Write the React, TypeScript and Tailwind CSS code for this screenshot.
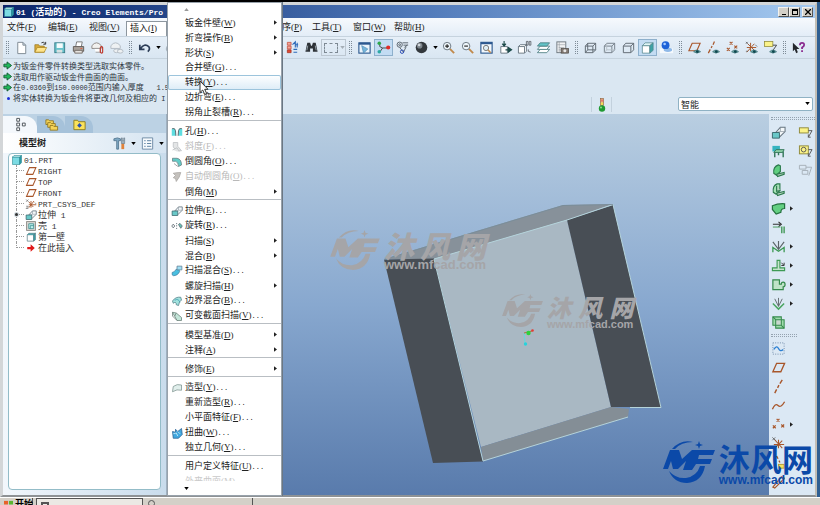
import type { ReactNode } from 'react';

// ---------- 文字 ----------

// 英文和数字用等宽字体，中文沿用外层字体
function Mixed({ text, small = false }: { text: string; small?: boolean }) {
  return (
    <>
      {text.split(/([\x20-\x7e]+)/).map((part, i) =>
        /^[\x20-\x7e]+$/.test(part) ? (
          <span key={i} className={small ? "font-['Liberation_Mono'] text-[7px]" : "font-['Liberation_Mono'] text-[8px]"}>
            {part}
          </span>
        ) : (
          part
        )
      )}
    </>
  );
}

function Label({ text, hotkey, dots = false }: { text: string; hotkey: string; dots?: boolean }) {
  return (
    <span className="whitespace-pre">
      {text}
      <span className="font-['Liberation_Serif'] text-[9px]">
        (<u>{hotkey}</u>)
      </span>
      {dots && <span className="font-['Liberation_Mono'] text-[7px]">...</span>}
    </span>
  );
}

// ---------- 图标 ----------

const BROWN = '#a8562a';
const eye = (
  <g>
    <path d="M7 12.5q3.5-3.6 7.5 0q-4 3-7.5 0z" fill="#6fa8a8" stroke="#3c6d74" strokeWidth=".7" />
    <circle cx="11" cy="12.3" r="1.5" fill="#10474f" />
  </g>
);
const cubeLines = 'M2.5 6.5h8v7h-8zM5 3.5h8.5v7L10.5 13.5M10.5 6.5l3-3M2.5 6.5L5 3.5';

const icons: Record<string, ReactNode> = {
  fresh: <path d="M4 2.5h5.5l3 3v9H4zM9.500 2.500v3h3" fill="#fff" stroke="#7c8791" />,
  open: (
    <g>
      <path d="M2 5h4l1 1.500h5V13H2z" fill="#d7a93a" stroke="#9b7a20" strokeWidth=".8" />
      <path d="M2 13l2.500-5h10L12 13z" fill="#ffe48a" stroke="#a98524" strokeWidth=".8" />
      <path d="M9 3q2.500-2 4 1M13.500 2v2.500H11" fill="none" stroke="#333" />
    </g>
  ),
  save: (
    <g>
      <rect x="3" y="3" width="10.500" height="10.500" fill="#69c3cc" stroke="#397e8b" />
      <rect x="5" y="3.500" width="6.500" height="5" fill="#f5fbfc" />
      <rect x="5" y="10.500" width="6" height="3" fill="#d8e1e2" />
    </g>
  ),
  print: (
    <g>
      <path d="M5 7l1-5h6l-1 5" fill="#fff" stroke="#777" />
      <path d="M2.500 7h11v5h-11z" fill="#aaa39c" stroke="#615b56" />
      <path d="M4 11h8v3H4z" fill="#e5e2df" stroke="#746d68" />
      <path d="M10 9h2" stroke="#e45c3c" />
    </g>
  ),
  mail: (
    <g>
      <path d="M2 6q5-6 10 0v3H2z" fill="#f2f1ef" stroke="#8e8985" />
      <path d="M5 9h6v4H6" fill="#fff" stroke="#999" />
      <path d="M11 8v5q1.500 2 2.500 0V8q-1-2-2.500 0" fill="none" stroke="#bd3529" strokeWidth="1.200" />
    </g>
  ),
  link: (
    <g fill="#eef1f3" stroke="#b2bbc3">
      <path d="M2 6q5-6 10 0v3H2z" />
      <ellipse cx="8" cy="11.500" rx="3" ry="2" />
      <ellipse cx="12" cy="12" rx="3" ry="2" />
    </g>
  ),
  undo: <path d="M3 5v5h5M3.500 9.500Q8 3 12.500 7q2 3-1 5.500" fill="none" stroke="#2c3d57" strokeWidth="1.800" />,
  redo: <path d="M13 5v5H8M12.500 9.500Q8 3 3.500 7q-2 3 1 5.500" fill="none" stroke="#a9b4bf" strokeWidth="1.500" />,
  regen: (
    <g>
      <path d="M2.500 2.500h4v3h-4zM2.500 6.500h4v3h-4z" fill="#f4a59a" stroke="#c4503e" strokeWidth=".8" />
      <path d="M2.500 10.500h4v3h-4z" fill="#e24b35" stroke="#a5301f" strokeWidth=".8" />
      <path d="M8 5l3-3v6M11 5h3M13 3v5M9 10h4M9 13h4" fill="none" stroke="#2c69b8" strokeWidth="1.200" />
    </g>
  ),
  find: (
    <g fill="#2d3237">
      <path d="M3.500 3h3l1 3h1l1-3h3l2 9.500H9.500V9h-3v3.500H1.500z" />
      <path d="M4 6l-1 5M12 6l1 5" stroke="#9aa5ae" />
    </g>
  ),
  view: (
    <g>
      <rect x="2" y="3" width="12" height="11" fill="#eaf4fb" stroke="#2b578f" strokeWidth="1.200" />
      <path d="M2 3h12v2H2z" fill="#2b578f" />
      <path d="M5 6l6.500 3.500L7 14z" fill="#74b5da" stroke="#4b86b3" strokeWidth=".7" />
    </g>
  ),
  spin: (
    <g>
      <path d="M4 4v3l3 1.500h6M7 8.500L4 13" fill="none" stroke="#444" />
      <circle cx="3.500" cy="3.500" r="1.900" fill="#2ca84a" />
      <circle cx="13" cy="8" r="2.200" fill="#e02a26" />
      <circle cx="3.500" cy="12.500" r="1.900" fill="#2ea9a5" />
    </g>
  ),
  orient: (
    <g fill="none" stroke="#59636c">
      <circle cx="5" cy="5" r="2.800" />
      <circle cx="5" cy="5" r="1" />
      <path d="M8 3h6M9 5.500h5M10 8l3-3M5 8l4 5 3-6" />
      <circle cx="7.500" cy="12.500" r="1.800" stroke="#2849b4" />
    </g>
  ),
  sphere: (
    <g>
      <circle cx="8" cy="8" r="6.200" fill="#33383d" />
      <circle cx="6" cy="6" r="3" fill="#7e868d" />
      <circle cx="5.500" cy="5.300" r="1.400" fill="#d5dade" />
    </g>
  ),
  zoomIn: (
    <g>
      <path d="M9.500 9.500l4.500 4.500" stroke="#c1894b" strokeWidth="2" />
      <circle cx="6.500" cy="6.500" r="4" fill="#eef6fb" stroke="#66737e" />
      <path d="M4.500 6.500h4M6.500 4.500v4" stroke="#222" strokeWidth="1.200" />
    </g>
  ),
  zoomOut: (
    <g>
      <path d="M9.500 9.500l4.500 4.500" stroke="#c1894b" strokeWidth="2" />
      <circle cx="6.500" cy="6.500" r="4" fill="#eef6fb" stroke="#66737e" />
      <path d="M4.500 6.500h4" stroke="#222" strokeWidth="1.200" />
    </g>
  ),
  refit: (
    <g>
      <rect x="2" y="2.500" width="12" height="11.500" fill="#f3f8fc" stroke="#2b578f" strokeWidth="1.200" />
      <path d="M2 2.500h12v2H2z" fill="#2b578f" />
      <circle cx="7.500" cy="8.500" r="2.800" fill="#dfeef5" stroke="#777" />
      <path d="M9.500 10.500l3 3" stroke="#c1894b" strokeWidth="1.600" />
    </g>
  ),
  named: (
    <g>
      <path d="M3 7h7v7H3z" fill="#fff" stroke="#6a7882" />
      <path d="M6.500 1v5M4.500 4l2 2.500 2-2.500M8 10.500h5M11 8l3.500 2.500L11 13z" fill="#1d4b4a" stroke="#1d4b4a" strokeWidth="1.200" />
    </g>
  ),
  saved: (
    <g>
      <path d="M1.500 7l2-2h6.500v7l-2 2H1.500zM1.500 7H8v7M8 7l2-2" fill="#fff" stroke="#6a7882" />
      <path d="M10 1.500v4h1.800v-4zM13 1.500v4h1.800v-4zM12 10v2l2.500 1" fill="none" stroke="#5a5f66" strokeWidth=".9" />
    </g>
  ),
  layers: (
    <g stroke="#4a7c80" strokeWidth=".9">
      <path d="M1.500 13.500l3-3.500h10l-3 3.500z" fill="#fff" />
      <path d="M1.500 10l3-3.500h10l-3 3.500z" fill="#fff" />
      <path d="M1.500 6.500l3-3.500h10l-3 3.500z" fill="#62c4c7" />
    </g>
  ),
  camera: (
    <g>
      <rect x="2" y="2" width="9.500" height="11.500" fill="#f2f3f4" stroke="#6e777f" />
      <path d="M2 5h9.500M4.500 2v11M4 8h6M4 10.500h6" stroke="#9aa1a7" strokeWidth=".7" />
      <rect x="6.500" y="9" width="8" height="5" fill="#847b74" stroke="#47423e" strokeWidth=".7" />
      <circle cx="10.500" cy="11.500" r="1.600" fill="#e8e8e8" />
    </g>
  ),
  wire: <path d={cubeLines + 'M5 3.500v7h8.500M5 10.500l-2.500 3'} fill="none" stroke="#5e6870" />,
  hidden: (
    <g fill="none" stroke="#737e87">
      <path d={cubeLines} />
      <path d="M5 3.500v7h8.500M5 10.500l-2.500 3" stroke="#b7c0c7" />
    </g>
  ),
  noHidden: <path d={cubeLines} fill="none" stroke="#5e6870" />,
  shaded: (
    <g stroke="#54868c" strokeWidth=".8">
      <path d="M2.500 6h8v8h-8z" fill="#fff" />
      <path d="M2.500 6l3-3h8.500l-3.500 3z" fill="#dff5f6" />
      <path d="M10.500 6L14 3v8l-3.500 3z" fill="#3aa3a6" />
    </g>
  ),
  enhanced: (
    <g>
      <path d="M1 9h14v5H1z" fill="#f5f9fd" />
      <ellipse cx="9.500" cy="10.500" rx="4.500" ry="2.200" fill="#8fb9e8" />
      <circle cx="7" cy="5.500" r="4.200" fill="#1d62d8" />
      <circle cx="6" cy="4.300" r="1.400" fill="#a4cbff" />
    </g>
  ),
  planeEye: (
    <g>
      <path d="M2 11.500L5.500 3.500h8.500L10.500 11.500z" fill="none" stroke={BROWN} strokeWidth="1.200" />
      {eye}
    </g>
  ),
  axisEye: (
    <g>
      <path d="M2.500 14l2-4M5.500 8.500l1-2M7.500 5l1.500-3.500" stroke={BROWN} strokeWidth="1.300" />
      {eye}
    </g>
  ),
  pointEye: (
    <g>
      <path d="M5 2l3 3M8 2L5 5M2 8.500l3 3M5 8.500l-3 3M10 6l3 3M13 6l-3 3" stroke={BROWN} strokeWidth="1.200" />
      {eye}
    </g>
  ),
  csysEye: (
    <g>
      <path d="M7 3v9M3 8h10M4 4l7 7M11 4l-8 9" stroke={BROWN} strokeWidth="1" />
      <path d="M2 2l2 2M4 2L2 4M12 5l2 2M2 12h2" stroke="#555" strokeWidth=".8" />
      {eye}
    </g>
  ),
  noteEye: (
    <g>
      <rect x="1.500" y="1.500" width="9" height="5.500" fill="#fbf389" stroke="#8f8939" strokeWidth=".8" />
      <path d="M10.500 5.500h4l-3.500 5" fill="none" stroke="#444" />
      {eye}
    </g>
  ),
  help: (
    <g>
      <path d="M2 3v9l2-2 1.500 4 1.800-1L6 9.500h3z" fill="#23272c" />
      <path d="M9.500 5.500q0-2.500 2.300-2.500t2.200 2.300q0 1.500-2.200 2.700v1.500M11.800 11v1.800" fill="none" stroke="#8a2a8f" strokeWidth="1.900" />
    </g>
  ),
  // 模型树
  part: (
    <g stroke="#2b8a94" strokeWidth=".8">
      <path d="M2 4h9.500v10H2z" fill="#7ddbe3" />
      <path d="M2 4l2-2h10l-2.500 2z" fill="#d8fafc" />
      <path d="M11.500 4L14 2v9.500L11.500 14z" fill="#2d9aa5" />
    </g>
  ),
  plane: <path d="M2 12.500L6 3.500h8.500L10.500 12.500z" fill="none" stroke={BROWN} strokeWidth="1.400" />,
  csys: (
    <g>
      <path d="M8 4v9M5 9h10M5 5l6 7M12 4l-7 9" stroke={BROWN} strokeWidth="1.200" />
      <path d="M1.500 2l3 3M4.500 2l-3 3M1.500 11h3l-3 3h3M13 6l2 2" stroke="#666" strokeWidth=".9" fill="none" />
    </g>
  ),
  extrude: (
    <g>
      <path d="M5 8l5-5.500h5v4.500l-6 6" fill="#f4f8fa" stroke="#66747f" strokeWidth="1.100" />
      <path d="M10 2.500v4.500h5M5 8l5-1" fill="none" stroke="#8d99a2" strokeWidth=".8" />
      <path d="M1.500 8h7.500v6H1.500z" fill="#69c8c8" stroke="#39666c" strokeWidth="1" />
    </g>
  ),
  shell: (
    <g>
      <path d="M2 2h12v12H2z" fill="#d5d3cf" stroke="#7d7b77" />
      <path d="M5 5h6.500v6.500H5z" fill="#bff0ee" stroke="#39898c" />
      <path d="M7 11.500V7.500h4.500" fill="none" stroke="#39898c" />
    </g>
  ),
  wall: (
    <g>
      <path d="M3 5h8.500v8.500H3z" fill="#fff" stroke="#5b7f86" />
      <path d="M3 5l2-2h9l-2.500 2M11.500 5L14 3v8.500l-2.500 2z" fill="#3aa0a8" stroke="#5b7f86" strokeWidth=".8" />
    </g>
  ),
  insert: <path d="M3 6.500h4.500V3L13 8l-5.500 5V9.500H3z" fill="#e01919" />,
  // 菜单
  hole: (
    <g>
      <path d="M1 3.500h4q1.500 1 1.500 9.500H1zM15 3.500h-4q-1.500 1-1.500 9.500H15z" fill="#5fdde0" />
      <path d="M1.500 3.500h3q2 1 2 9.500M14.500 3.500h-3q-2 1-2 9.500" fill="none" stroke="#5d6a70" strokeWidth="1.300" />
    </g>
  ),
  draft: (
    <g fill="#e3e5e6" stroke="#b9bdc0">
      <path d="M3 2h6v5l5 6H7L3 8z" />
      <path d="M2 12l6-3 3 5" />
    </g>
  ),
  round: (
    <g>
      <path d="M2 3h6q6 1 6 9l-4 2q0-6-4-7H2z" fill="#62ccc7" stroke="#5b6f73" strokeWidth=".9" />
      <path d="M4 10l5 4" stroke="#888" />
    </g>
  ),
  autoRound: <path d="M3 3q5-1 10-1-1 6-6 12l-1-4-3-1 3-3z" fill="#c4c1bd" stroke="#a7a4a0" />,
  revolve: (
    <g fill="none" stroke="#67737a" strokeWidth="1.200">
      <path d="M3 5.500L5 8l-2 2.500L1 8z" />
      <path d="M7.500 4v1.500M7.500 7v1.500M7.500 10.500V12" />
      <path d="M10 6l2-1.500 3 3.500-2 3z" fill="#5fc4b7" />
    </g>
  ),
  sweepBlend: (
    <g>
      <path d="M1.500 10q4-1 5-4l4-1 1 4q-3 5-6 5-3 1-4-1z" fill="#49bfe0" stroke="#356f94" strokeWidth=".8" />
      <path d="M8 1.500h6.500v5H8z" fill="#9fe0f5" stroke="#5d7c94" />
    </g>
  ),
  boundary: (
    <g>
      <path d="M2 8q4-6 11-5l1 4q-3 0-4 7l-3-1q0-5-4-2z" fill="#a2e3de" stroke="#4d7c85" />
      <path d="M5 7q5-3 7 3" fill="none" stroke="#3e9bb0" />
    </g>
  ),
  varSweep: (
    <g>
      <path d="M2 3l5 1 7 6v4H8z" fill="#c3e6d9" stroke="#657c74" />
      <path d="M2 3v5l6 6M7 4L5 8" fill="none" stroke="#657c74" />
    </g>
  ),
  style: <path d="M2 13l1-7q5-4 11-2v7q-6-2-12 2z" fill="#e1efec" stroke="#7b918d" />,
  warp: (
    <g>
      <path d="M2 6l4 1V3l3 3 5-4 1 8-5 5H3z" fill="#41a8df" stroke="#2a5f91" />
      <path d="M3 9l4-1 2 4M9 6l3 3" fill="none" stroke="#d7f1fb" />
    </g>
  ),
  // 右侧工具栏
  flatWall: (
    <g>
      <path d="M1.500 2h8v6h-8z" fill="#35b4c0" />
      <path d="M3 9l2.500-3H14l-1.500 3z" fill="#8bcfa6" stroke="#33775a" />
      <path d="M4 9v5M8 9v3M13 8v6" stroke="#33775a" strokeWidth="1.500" />
    </g>
  ),
  flange: (
    <g stroke="#2b7a4c" strokeWidth="1.200">
      <path d="M3 11q-1-7 5-9l2 1v6l-4 4z" fill="#5fcf80" />
      <path d="M6 12l8-2v2l-7 2.500z" fill="#a9c9b5" />
    </g>
  ),
  flange2: (
    <g stroke="#2b7a4c" strokeWidth="1.200">
      <path d="M2.500 11q-1-7 4-9h3v7l-4 4z" fill="#a4e2b5" />
      <path d="M6 4v6l4-1M6 12l8-2v2l-7 2.500z" fill="#b9d5c1" />
    </g>
  ),
  bendBack: <path d="M1.500 5q6-2.500 13-2v5q-4 0-4 4l-5 2-4-5z" fill="#63cf82" stroke="#24713f" strokeWidth="1.300" />,
  extend: (
    <g>
      <path d="M2 4.500h8M8 2l3 2.500L8 7" fill="none" stroke="#333" strokeWidth="1.200" />
      <path d="M2 7.500h8" stroke="#459a5a" />
      <path d="M11.500 7v7M14 7v7" stroke="#459a5a" strokeWidth="1.500" />
    </g>
  ),
  bend: (
    <g fill="none">
      <path d="M2 3l6 8 6-8M8 2v9" stroke="#5c6467" strokeWidth="1.200" />
      <path d="M2 14V9l6 4 6-4v5" stroke="#3e9a55" strokeWidth="1.400" />
    </g>
  ),
  edgeBend: (
    <g>
      <path d="M1.500 10.500h5v-8h3v8h5v3h-13z" fill="#c5e3cc" stroke="#3e9a55" strokeWidth="1.200" />
      <path d="M11 5l2.500 2.500M14 5v3h-3" fill="none" stroke="#333" />
    </g>
  ),
  notch: <path d="M2 3h7v4.500h2q0-2 2-2t2 2.500-2 2.500v3H2z" fill="#bfe3c7" stroke="#358a4c" strokeWidth="1.300" />,
  punch: (
    <g fill="none">
      <path d="M8 2v9M4 3l4 8 4-8" stroke="#61696c" />
      <path d="M2 8l6 6 6-6" stroke="#4aa660" strokeWidth="1.600" />
    </g>
  ),
  unbend: (
    <g stroke="#358a4c" strokeWidth="1.100">
      <path d="M2 2h9v3h3v9H5v-3H2z" fill="#9fdcac" />
      <path d="M5 5h6v6H5zM2 2l3 3M11 11l3 3" fill="#c9d8cf" />
    </g>
  ),
  sketch: (
    <g fill="none">
      <path d="M2 2h12v12H2z" stroke="#6d87a5" strokeDasharray="1 1.500" />
      <path d="M3 9q3-5 5-1t5 1" stroke="#2a7fd2" strokeWidth="1.500" />
    </g>
  ),
  axis: <path d="M4 15l2-4M7 9.500l1.500-3M9.500 5L12 1" stroke={BROWN} strokeWidth="1.500" />,
  curve: <path d="M1.500 12q3-7 6-4t7-4" fill="none" stroke={BROWN} strokeWidth="1.400" />,
  points: <path d="M6 2l3 3M9 2L6 5M2 9l3 3M5 9l-3 3M11 8l3 3M14 8l-3 3" stroke={BROWN} strokeWidth="1.300" />,
  csysNew: (
    <g>
      <path d="M8 4v9M3 9h11M4 4l8 9M12 5l-8 8" stroke={BROWN} strokeWidth="1.100" />
      <path d="M1.500 1.500l3 3M4.500 1.500l-3 3" stroke="#666" />
    </g>
  ),
  axisNote: (
    <g>
      <path d="M6 1l1.500 3M8.500 6l1 2" stroke={BROWN} strokeWidth="1.400" />
      <rect x="8" y="10" width="6" height="4" fill="#f5df62" stroke="#b59c31" />
    </g>
  ),
  dim: <path d="M2 14L11 3q3 0 3 2L4 15z" fill="none" stroke={BROWN} strokeWidth="1.300" />,
  note: (
    <g>
      <rect x="1.500" y="3" width="9.500" height="5.500" fill="#fbf389" stroke="#8f8939" />
      <path d="M11 6h4l-4 7M11 10v3h2.500" fill="none" stroke="#555" />
    </g>
  ),
  noteSymbol: (
    <g>
      <rect x="1.500" y="2" width="9.500" height="8.500" fill="#fbf389" stroke="#8f8939" />
      <circle cx="6" cy="6" r="2.500" fill="none" stroke="#555" />
      <path d="M11 6h4l-4 7M11 10v3h2.500" fill="none" stroke="#555" />
    </g>
  ),
  noteGray: (
    <g fill="none" stroke="#a5afb8">
      <path d="M1.500 2.500h7v4h-7zM4.500 8h6v4h-6zM8.500 4.500h6l-3 9" />
    </g>
  ),
  // 面板
  tools: (
    <g>
      <path d="M2 3q4-2 7 0v2H7v9H5V5H2z" fill="#7ea8c4" stroke="#4a6c86" strokeWidth=".8" />
      <path d="M10 8h3v6h-3z" fill="#e0833c" />
      <path d="M10 8V2h1v3h1.500V2h1v6z" fill="#9fb1bd" stroke="#5d7080" strokeWidth=".6" />
    </g>
  ),
  list: (
    <g>
      <path d="M2.500 2h11v12h-11z" fill="#f5f9fc" stroke="#6e8ba5" />
      <path d="M4.500 5h1.500M4.500 8h1.500M4.500 11h1.500M7.500 5H12M7.500 8H12M7.500 11H12" stroke="#5a7fa0" />
    </g>
  ),
  treeTab: (
    <g fill="#fff" stroke="#4a5157">
      <path d="M4 1.500h3v3H4zM4 6.500h3v3H4zM4 11.500h3v3H4zM10 6.500h3v3h-3z" />
    </g>
  ),
  folders: (
    <g fill="#f5d458" stroke="#8d7420" strokeWidth=".9">
      <path d="M2 3h3l1 1h4v4H2z" />
      <path d="M4 6h3l1 1h4v4H4z" />
      <path d="M6.500 9h3l1 1h4v4h-8z" />
    </g>
  ),
  favorite: (
    <g>
      <path d="M2 3.500h4l1 1.500h7v8.500H2z" fill="#fae25c" stroke="#8d7f20" />
      <path d="M8 6.500L10.500 9 8 11.500 5.500 9z" fill="#2b50b0" />
    </g>
  ),
};

function Icon({ name, small = false }: { name: string; small?: boolean }) {
  return (
    <svg viewBox="0 0 16 16" aria-hidden="true" className={small ? 'size-[12px] shrink-0' : 'size-[15px] shrink-0'}>
      {icons[name]}
    </svg>
  );
}

function Down({ className = 'text-black' }: { className?: string }) {
  return (
    <svg viewBox="0 0 6 4" aria-hidden="true" className={`h-[3px] w-[5px] shrink-0 ${className}`}>
      <path d="M0 0h6L3 4z" fill="currentColor" />
    </svg>
  );
}

function Right() {
  return (
    <svg viewBox="0 0 4 6" aria-hidden="true" className="h-[5px] w-[3px] shrink-0 text-[#222]">
      <path d="M0 0v6l4-3z" fill="currentColor" />
    </svg>
  );
}

// ---------- 标题栏、菜单栏 ----------

function TitleBar() {
  const button = 'flex h-[10px] w-[11px] items-end justify-center border border-[#f4f2ee] border-r-[#555] border-b-[#555] bg-[#d4d0c8]';
  return (
    <header className="flex h-[13px] shrink-0 items-center bg-linear-to-r from-[#0a246a] via-[#4f78b8] to-[#a6caf0] pr-0.5 text-white">
      <Icon name="part" small />
      <h1 className="ml-px flex-1 overflow-hidden text-[9px] leading-[13px] font-bold whitespace-pre">
        <Mixed text="01 (活动的) - Creo Elements/Pro S" />
      </h1>
      <button aria-label="最小化" className={button}>
        <span className="mb-px h-px w-1 bg-black" />
      </button>
      <button aria-label="最大化" className={button}>
        <span className="mb-px h-[6px] w-[6px] border border-t-2 border-black" />
      </button>
      <button aria-label="关闭" className={`${button} ml-0.5`}>
        <svg viewBox="0 0 6 6" className="mb-px size-[6px]">
          <path d="M0 0l6 6M6 0L0 6" stroke="#000" strokeWidth="1.300" />
        </svg>
      </button>
    </header>
  );
}

function MenuBar() {
  const item = 'w-[41px] shrink-0 pl-1 text-left';
  return (
    <nav className="flex h-[18px] shrink-0 items-stretch bg-linear-to-b from-[#f6f9fd] to-[#e3edf7] text-[9px] leading-[18px] text-[#222]">
      <button className={item}><Label text="文件" hotkey="F" /></button>
      <button className={item}><Label text="编辑" hotkey="E" /></button>
      <button className={item}><Label text="视图" hotkey="V" /></button>
      <button className="mt-[3px] w-[41px] shrink-0 border border-b-0 border-[#8d969e] bg-white pb-[3px] pl-[3px] text-left leading-[10px]">
        <Label text="插入" hotkey="I" />
      </button>
      <span className="w-[111px] shrink-0" />
      <button className="w-[30px] shrink-0 pl-1 text-left"><Label text="序" hotkey="P" /></button>
      <button className={item}><Label text="工具" hotkey="T" /></button>
      <button className={item}><Label text="窗口" hotkey="W" /></button>
      <button className={item}><Label text="帮助" hotkey="H" /></button>
    </nav>
  );
}

// ---------- 工具栏 ----------

function Grip() {
  return (
    <span className="flex w-[9px] shrink-0 justify-center gap-px py-0.5">
      <span className="border-l border-dotted border-[#7e8b97]" />
      <span className="border-l border-dotted border-[#7e8b97]" />
    </span>
  );
}

function Tool({ name, active = false }: { name: string; active?: boolean }) {
  return (
    <button
      aria-label={name}
      className={`flex w-[19px] shrink-0 items-center justify-center ${active ? 'border border-[#8eb0cc] bg-[#c3dcf3]' : ''}`}
    >
      <Icon name={name} />
    </button>
  );
}

function Drop() {
  return (
    <button aria-label="更多" className="flex w-2 shrink-0 items-center justify-center">
      <Down />
    </button>
  );
}

function ToolBar() {
  return (
    <div className="flex h-[23px] shrink-0 items-stretch border-t border-b border-[#c6d3de] bg-linear-to-b from-[#e6eff8] to-[#d9e6f2] py-0.5">
      <div className="flex w-[280px] shrink-0 items-stretch">
        <Grip />
        {['fresh', 'open', 'save', 'print', 'mail', 'link'].map((n) => <Tool key={n} name={n} />)}
        <Grip />
        <Tool name="undo" />
        <Drop />
        <Tool name="redo" />
      </div>
      <Tool name="regen" />
      <Tool name="find" />
      <button aria-label="选取框" className="flex w-[25px] shrink-0 items-center border border-[#bcc7d1] pl-0.5">
        <span className="h-[10px] w-[14px] border border-dashed border-[#7d8993]" />
        <Down className="ml-0.5 text-[#a5aeb6]" />
      </button>
      <Grip />
      <Tool name="view" />
      <Tool name="spin" active />
      <Tool name="orient" />
      <Tool name="sphere" />
      <Drop />
      {['zoomIn', 'zoomOut', 'refit', 'named', 'saved', 'layers', 'camera'].map((n) => <Tool key={n} name={n} />)}
      <Grip />
      {['wire', 'hidden', 'noHidden'].map((n) => <Tool key={n} name={n} />)}
      <Tool name="shaded" active />
      <Tool name="enhanced" />
      <Grip />
      {['planeEye', 'axisEye', 'pointEye', 'csysEye', 'noteEye'].map((n) => <Tool key={n} name={n} />)}
      <Grip />
      <Tool name="help" />
    </div>
  );
}

// ---------- 消息区 ----------

const messages = [
  '为钣金件零件转换类型选取实体零件。',
  '选取用作驱动钣金件曲面的曲面。',
  '在0.0360到150.0000范围内输入厚度   1.5',
];

function MessageArea() {
  return (
    <section className="flex h-[55px] shrink-0 items-end bg-[#dae7f2] pr-0.5">
      <ul className="flex-1 self-start pt-px text-[8px] leading-[11px] whitespace-pre text-[#2c343c]">
        {messages.map((m) => (
          <li key={m} className="flex h-[11px] items-center gap-px">
            <svg viewBox="0 0 10 10" className="size-[9px] shrink-0">
              <path d="M1 3.500h3.500V1L9.500 5 4.500 9V6.500H1z" fill="#1fb95a" stroke="#10572c" />
            </svg>
            <span><Mixed text={m} small /></span>
          </li>
        ))}
        <li className="flex h-[11px] items-center gap-[3px] pl-1">
          <span className="size-[3px] rounded-full bg-[#1b2fd6]" />
          <span><Mixed text="将实体转换为钣金件将更改几何及相应的 I" small /></span>
        </li>
      </ul>
      <div className="mb-0.5 flex h-[15px] w-[21px] items-center justify-center border-x border-[#c3d1dd]">
        <svg viewBox="0 0 8 14" className="h-[14px] w-2">
          <rect x="2.500" y="0.500" width="3" height="7" fill="#e3c08a" stroke="#8b5d38" strokeWidth=".6" />
          <circle cx="4" cy="2.500" r="1.200" fill="#e8786a" />
          <circle cx="4" cy="5.800" r="1.200" fill="#f2dd55" />
          <circle cx="4" cy="10.500" r="3.200" fill="#1f9a33" />
          <circle cx="3" cy="9.500" r="1" fill="#8fe08f" />
        </svg>
      </div>
      <label className="relative mb-[3px] ml-[66px] w-[135px]">
        <select aria-label="过滤器" className="block h-[14px] w-full appearance-none rounded-xs border border-[#8fb2c4] bg-white pl-0.5 text-[9px] leading-[11px] text-[#222]">
          <option>智能</option>
        </select>
        <span className="pointer-events-none absolute top-[5px] right-[3px] flex"><Down /></span>
      </label>
    </section>
  );
}

// ---------- 模型树 ----------

const tree = [
  { icon: 'plane', text: 'RIGHT' },
  { icon: 'plane', text: 'TOP' },
  { icon: 'plane', text: 'FRONT' },
  { icon: 'csys', text: 'PRT_CSYS_DEF' },
  { icon: 'extrude', text: '拉伸 1', expand: true },
  { icon: 'shell', text: '壳 1' },
  { icon: 'wall', text: '第一壁' },
  { icon: 'insert', text: '在此插入' },
];

function ModelTree() {
  return (
    <aside className="flex w-[164px] shrink-0 flex-col border-r border-[#9fb0c0] bg-linear-to-r from-[#f2f7fc] to-[#c9dcec]">
      <div className="flex h-[19px] shrink-0 items-end bg-[#bcd2e4]">
        <button aria-label="模型树" className="flex h-[17px] w-[34px] items-center justify-center rounded-tr-xl bg-[#f4f8fc]"><Icon name="treeTab" /></button>
        <button aria-label="文件夹" className="flex h-[17px] w-7 items-center justify-center rounded-tr-xl bg-[#a6c2da]"><Icon name="folders" /></button>
        <button aria-label="收藏夹" className="flex h-[17px] w-7 items-center justify-center rounded-tr-xl bg-[#a6c2da]"><Icon name="favorite" /></button>
      </div>
      <div className="flex h-5 shrink-0 items-center bg-linear-to-r from-white to-[#d5e4f1] pr-0.5 pl-4">
        <h2 className="flex-1 text-[9px] font-bold text-[#222]">模型树</h2>
        <Icon name="tools" />
        <span className="mx-1 flex"><Down /></span>
        <Icon name="list" />
        <span className="ml-1 flex"><Down /></span>
      </div>
      <div className="mx-[5px] mb-[5px] flex-1 rounded-sm border border-[#93bcc8] bg-white pl-[2px] text-[9px] leading-[11px] text-[#333]">
        <div className="flex h-[11px] items-center gap-px">
          <Icon name="part" small />
          <span><Mixed text="01.PRT" /></span>
        </div>
        <ul className="ml-[5px]">
          {tree.map((node, i) => (
            <li key={node.text} className="relative flex h-[11px] items-center gap-px">
              <span className="h-[6px] w-[8px] shrink-0 self-start border-b border-l border-dotted border-[#9a9a9a]" />
              {i < tree.length - 1 && <span className="absolute top-[6px] left-0 h-[5px] border-l border-dotted border-[#9a9a9a]" />}
              {node.expand && (
                <span className="absolute top-[3px] left-[-2px] flex size-[5px] items-center justify-center rounded-full bg-[#cfd8de]">
                  <span className="size-[3px] rounded-full bg-[#333]" />
                </span>
              )}
              <Icon name={node.icon} small />
              <span className="whitespace-pre"><Mixed text={node.text} /></span>
            </li>
          ))}
        </ul>
      </div>
    </aside>
  );
}

// ---------- 插入菜单 ----------

interface Entry {
  text: string;
  hotkey: string;
  icon?: string;
  sub?: boolean;
  disabled?: boolean;
  active?: boolean;
}

const groups: Entry[][] = [
  [
    { text: '钣金件壁', hotkey: 'W', sub: true },
    { text: '折弯操作', hotkey: 'B', sub: true },
    { text: '形状', hotkey: 'S', sub: true },
    { text: '合并壁', hotkey: 'G' },
    { text: '转换', hotkey: 'Y', active: true },
    { text: '边折弯', hotkey: 'E' },
    { text: '拐角止裂槽', hotkey: 'R' },
  ],
  [
    { text: '孔', hotkey: 'H', icon: 'hole' },
    { text: '斜度', hotkey: 'F', icon: 'draft', disabled: true },
    { text: '倒圆角', hotkey: 'O', icon: 'round' },
    { text: '自动倒圆角', hotkey: 'O', icon: 'autoRound', disabled: true },
    { text: '倒角', hotkey: 'M', sub: true },
  ],
  [
    { text: '拉伸', hotkey: 'E', icon: 'extrude' },
    { text: '旋转', hotkey: 'R', icon: 'revolve' },
    { text: '扫描', hotkey: 'S', sub: true },
    { text: '混合', hotkey: 'B', sub: true },
    { text: '扫描混合', hotkey: 'S', icon: 'sweepBlend' },
    { text: '螺旋扫描', hotkey: 'H', sub: true },
    { text: '边界混合', hotkey: 'B', icon: 'boundary' },
    { text: '可变截面扫描', hotkey: 'V', icon: 'varSweep' },
  ],
  [
    { text: '模型基准', hotkey: 'D', sub: true },
    { text: '注释', hotkey: 'A', sub: true },
  ],
  [{ text: '修饰', hotkey: 'E', sub: true }],
  [
    { text: '造型', hotkey: 'Y', icon: 'style' },
    { text: '重新造型', hotkey: 'R' },
    { text: '小平面特征', hotkey: 'F' },
    { text: '扭曲', hotkey: 'W', icon: 'warp' },
    { text: '独立几何', hotkey: 'Y' },
  ],
  [{ text: '用户定义特征', hotkey: 'U' }],
];

function InsertMenu() {
  return (
    <div role="menu" className="absolute top-0 bottom-[9px] left-[167px] z-20 flex w-[115px] flex-col border border-[#98a2ab] bg-white text-[9px] text-[#222] shadow-[1px_0_0_#6b7783]">
      <span className="flex h-3 shrink-0 items-center pl-4">
        <svg viewBox="0 0 6 4" className="h-[3px] w-[5px]"><path d="M0 4h6L3 0z" fill="#999" /></svg>
      </span>
      {groups.map((group, g) => (
        <div key={g} role="group" className={g > 0 ? 'shrink-0 border-t border-[#b9bec3] pt-[3px]' : 'shrink-0'}>
          {group.map((entry) => (
            <button
              key={entry.text}
              role="menuitem"
              disabled={entry.disabled}
              className={`flex h-[15px] w-full items-center rounded-xs pr-1 text-left leading-[13px] disabled:text-[#b9b9b9] ${
                entry.active ? 'bg-linear-to-b from-white to-[#dcecf7] ring-1 ring-[#9cc4dc] ring-inset' : ''
              }`}
            >
              <span className="flex w-[17px] shrink-0 justify-center">{entry.icon && <Icon name={entry.icon} small />}</span>
              <span className="flex-1"><Label text={entry.text} hotkey={entry.hotkey} dots={!entry.sub} /></span>
              {entry.sub && <Right />}
            </button>
          ))}
        </div>
      ))}
      <span className="block h-[7px] shrink-0 overflow-hidden pl-[17px] leading-[13px] text-[#c9c9c9]">
        <Label text="外来曲面" hotkey="M" />
      </span>
      <span className="flex flex-1 items-center pl-4"><Down /></span>
    </div>
  );
}

function Cursor() {
  return (
    <svg viewBox="0 0 10 16" className="absolute top-[78px] left-[199px] z-30 h-4 w-[10px]">
      <path d="M1 1v11.500l2.700-2.500 2 4.500 2-1-2-4.200H9z" fill="#fff" stroke="#333" />
    </svg>
  );
}

// ---------- 三维视图 ----------

function Logo({ className }: { className: string }) {
  return (
    <svg viewBox="0 0 52 42" className={className} fill="currentColor">
      <path d="M0 28L7 9h9l3 9 10-9h23l-2 5H36l-1 4h14l-2 5H33l-4 6h-9l3-9-8 8h-5l-2-8-3 8z" />
      <path d="M9 8Q18-2 30 1 18 1 12 8zM6 30q7 8 17 7 11-2 14-12h5Q39 41 24 42 11 42 6 30z" />
      <path d="M36 0l1 3 3 1-3 1-1 3-1-3-3-1 3-1z" />
    </svg>
  );
}

function CanvasMark({ large = false }: { large?: boolean }) {
  return (
    <div className="flex items-start gap-1 text-[#a5a5a8]">
      <Logo className={large ? 'h-[40px] w-[50px]' : 'h-[33px] w-[41px]'} />
      <div>
        <div className={`flex justify-between font-black italic ${large ? 'text-[30px] leading-[30px]' : 'text-[24px] leading-[25px]'}`}>
          <span>沐</span><span>风</span><span>网</span>
        </div>
        <div className={`font-['Liberation_Sans'] font-bold ${large ? 'text-[13px] leading-[10px]' : 'text-[11px] leading-[10px]'}`}>www.mfcad.com</div>
      </div>
    </div>
  );
}

function Viewport() {
  return (
    <main className="relative flex-1 overflow-hidden bg-linear-to-b from-[#b9cee1] via-[#88a8cf] to-[#597bac]">
      <svg viewBox="167 114 602 382" preserveAspectRatio="xMinYMin meet" className="h-[382px] w-[602px]">
        <path d="M384 259L563 205 613 204 567 220 434 259z" fill="#87919a" />
        <path d="M434 259L567 220 611 407 481 447z" fill="#a9b8c3" />
        <path d="M481 447L611 407 629 409 628 417 483 461z" fill="#848e96" />
        <path d="M384 259.500L434 258.500 483 461.500 433 463z" fill="#484e55" />
        <path d="M567 220L613 205 661 407 611 407z" fill="#484e55" />
        <path d="M434 259L483 461 628 417M434 259L567 220 613 204.500 661 407.500H630" fill="none" stroke="#b5d3da" />
        <path d="M384 259.500L563 205.500 613 204.500" fill="none" stroke="#778d99" strokeWidth=".8" />
        <path d="M524 333l1 10" stroke="#67d7df" />
        <path d="M524 333l8-2" stroke="#b46d3c" />
        <circle cx="525.500" cy="344" r="1.700" fill="#27d3dc" />
        <circle cx="528.500" cy="333" r="2.200" fill="#2bd23b" />
        <circle cx="532.500" cy="330.500" r="1.300" fill="#e33b34" />
      </svg>
      <div className="absolute top-[116px] left-[163px]"><CanvasMark large /></div>
      <div className="absolute top-[180px] left-[335px]"><CanvasMark /></div>
    </main>
  );
}

// ---------- 右侧工具栏 ----------

const sideTools: { name: string; more?: boolean }[] = [
  { name: 'extrude' }, { name: 'flatWall' }, { name: 'flange' }, { name: 'flange2' },
  { name: 'bendBack', more: true }, { name: 'extend' }, { name: 'bend', more: true },
  { name: 'edgeBend', more: true }, { name: 'notch', more: true }, { name: 'punch', more: true }, { name: 'unbend' },
];
const datumTools: { name: string; more?: boolean }[] = [
  { name: 'sketch' }, { name: 'plane' }, { name: 'axis' }, { name: 'curve' },
  { name: 'points', more: true }, { name: 'csysNew' }, { name: 'axisNote' }, { name: 'dim' },
];

function SideTool({ name, more = false }: { name: string; more?: boolean }) {
  return (
    <button aria-label={name} className="flex h-[19px] items-center gap-1">
      <Icon name={name} />
      {more && <Right />}
    </button>
  );
}

function SideBar() {
  return (
    <aside className="flex w-[46px] shrink-0 justify-between overflow-hidden bg-[#dbe8f4] pt-[3px] pl-0.5">
      <div className="flex flex-col">
        <span className="mb-[3px] h-[3px] w-[26px] border-y border-dotted border-[#94a2af]" />
        {sideTools.map((t) => <SideTool key={t.name} {...t} />)}
        <span className="my-0.5 h-[3px] w-[26px] border-y border-dotted border-[#94a2af]" />
        {datumTools.map((t) => <SideTool key={t.name} {...t} />)}
      </div>
      <div className="flex flex-col">
        <span className="mb-[3px] h-[3px] w-[17px] border-y border-dotted border-[#94a2af]" />
        {['note', 'noteSymbol', 'noteGray'].map((n) => <SideTool key={n} name={n} />)}
      </div>
    </aside>
  );
}

// ---------- 任务栏 ----------

function TaskBar() {
  return (
    <footer className="flex h-2 shrink-0 items-start overflow-hidden border-t border-white bg-[#d4d0c8] text-[9px] leading-[12px]">
      <button className="flex h-4 w-[33px] shrink-0 items-start gap-0.5 border-r border-[#555] pl-1 font-bold">
        <svg viewBox="0 0 10 10" className="mt-0.5 size-[9px] shrink-0">
          <path d="M0 1h4.500v4H0z" fill="#e8622a" />
          <path d="M5.500 1H10v4H5.500z" fill="#5cb531" />
          <path d="M0 6h4.500v4H0z" fill="#3a78d0" />
          <path d="M5.500 6H10v4H5.500z" fill="#f0c030" />
        </svg>
        <span className="shrink-0">开始</span>
      </button>
      <button aria-label="任务" className="ml-[3px] flex h-4 w-[107px] shrink-0 items-start border border-[#555] bg-[#ebe9e4] pt-[3px] pl-1">
        <span className="h-2 w-2 border-2 border-[#555]" />
      </button>
      <button aria-label="任务" className="ml-1 flex h-4 w-[106px] shrink-0 items-start border-r border-[#555] pt-0.5 pl-px">
        <span className="size-[7px] rounded-full border border-[#555]" />
      </button>
    </footer>
  );
}

export default function App() {
  return (
    <div className="relative flex h-screen flex-col overflow-hidden border-t-2 border-black bg-[#2f5f92] font-['Noto_Sans_CJK_SC',sans-serif]">
      <div className="mr-[3px] flex min-h-0 flex-1 flex-col border-t-3 border-r-2 border-b-2 border-l-3 border-[#d3d6d8] border-r-[#c2beb5] border-b-[#8e9295]">
        <TitleBar />
        <MenuBar />
        <ToolBar />
        <MessageArea />
        <div className="flex min-h-0 flex-1">
          <ModelTree />
          <Viewport />
          <SideBar />
        </div>
      </div>
      <TaskBar />
      <InsertMenu />
      <Cursor />
      {/* 右下角站标 */}
      <div className="absolute right-[7px] bottom-[19px] z-10 flex items-start gap-1 text-[#0b49a8]">
        <Logo className="h-[42px] w-[52px]" />
        <div>
          <div className="flex justify-between text-[31px] leading-[33px] font-bold">
            <span>沐</span><span>风</span><span>网</span>
          </div>
          <div className="font-['Liberation_Sans'] text-[12px] leading-[12px] font-bold">www.mfcad.com</div>
        </div>
      </div>
    </div>
  );
}
